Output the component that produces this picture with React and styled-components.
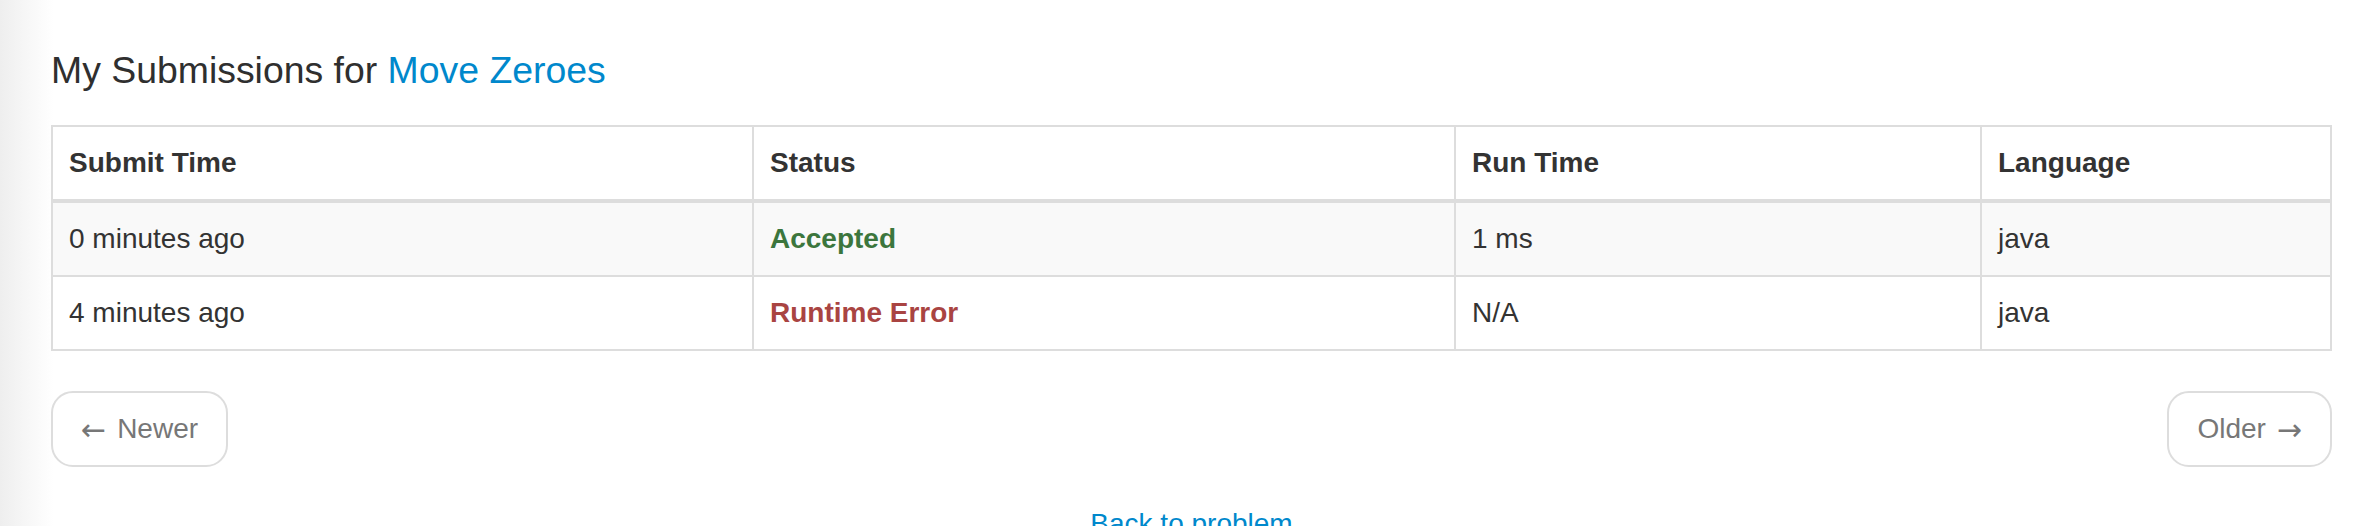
import React from "react";
import styled, { createGlobalStyle } from "styled-components";

const GlobalStyle = createGlobalStyle`
  html, body {
    margin: 0;
    padding: 0;
  }
  body {
    font-family: "Liberation Sans", Arial, Helvetica, sans-serif;
    color: #333;
    background: linear-gradient(to right, #eeeeee 0px, #f6f6f6 24px, #ffffff 54px) no-repeat;
    background-color: #fff;
    min-height: 526px;
  }
`;

const Page = styled.div`
  padding: 50px 34px 0 51px;
`;

const Heading = styled.h4`
  margin: 0 0 35px 0;
  font-size: 37.4px;
  font-weight: 400;
  line-height: 40px;
  color: #2f2f2f;
`;

const Link = styled.a`
  color: #0088cc;
  text-decoration: none;
`;

const Table = styled.table`
  width: 100%;
  table-layout: fixed;
  border-collapse: collapse;
  border: 2px solid #ddd;
  font-size: 28px;
  line-height: 40px;
  margin: 0 0 40px 0;
`;

const HeadCell = styled.th`
  text-align: left;
  font-weight: 700;
  vertical-align: bottom;
  padding: 16px;
  border: 2px solid #ddd;
  border-bottom: 4px solid #ddd;
  color: #333;
`;

const Row = styled.tr`
  background: ${(p) => (p.$striped ? "#f9f9f9" : "#fff")};
`;

const Cell = styled.td`
  padding: 16px;
  border: 2px solid #ddd;
  vertical-align: top;
  color: #333;
`;

const Status = styled.strong`
  font-weight: 700;
  color: ${(p) => (p.$ok ? "#3c763d" : "#a94442")};
`;

const Pager = styled.div`
  display: flex;
  justify-content: space-between;
  align-items: center;
  margin: 0 0 37px 0;
`;

const PagerButton = styled.a`
  display: inline-flex;
  align-items: center;
  gap: 11px;
  padding: 16px 28px;
  font-size: 28px;
  line-height: 40px;
  color: #777;
  background: #fff;
  border: 2px solid #ddd;
  border-radius: 22px;
  text-decoration: none;
`;

const Arrow = styled.span`
  font-family: "DejaVu Sans", sans-serif;
  font-size: 30px;
  line-height: 40px;
  position: relative;
  top: 1px;
`;

const Back = styled.div`
  text-align: center;
  font-size: 28px;
  line-height: 40px;
`;

const rows = [
  { time: "0 minutes ago", status: "Accepted", ok: true, run: "1 ms", lang: "java" },
  { time: "4 minutes ago", status: "Runtime Error", ok: false, run: "N/A", lang: "java" },
];

export default function App() {
  return (
    <>
      <GlobalStyle />
      <Page>
        <Heading>
          My Submissions for <Link href="#">Move Zeroes</Link>
        </Heading>
        <Table>
          <colgroup>
            <col style={{ width: "701px" }} />
            <col style={{ width: "702px" }} />
            <col style={{ width: "526px" }} />
            <col style={{ width: "350px" }} />
          </colgroup>
          <thead>
            <tr>
              <HeadCell>Submit Time</HeadCell>
              <HeadCell>Status</HeadCell>
              <HeadCell>Run Time</HeadCell>
              <HeadCell>Language</HeadCell>
            </tr>
          </thead>
          <tbody>
            {rows.map((r, i) => (
              <Row key={i} $striped={i % 2 === 0}>
                <Cell>{r.time}</Cell>
                <Cell>
                  <Status $ok={r.ok}>{r.status}</Status>
                </Cell>
                <Cell>{r.run}</Cell>
                <Cell>{r.lang}</Cell>
              </Row>
            ))}
          </tbody>
        </Table>
        <Pager>
          <PagerButton href="#">
            <Arrow>←</Arrow>
            <span>Newer</span>
          </PagerButton>
          <PagerButton href="#">
            <span>Older</span>
            <Arrow>→</Arrow>
          </PagerButton>
        </Pager>
        <Back>
          <Link href="#">Back to problem</Link>
        </Back>
      </Page>
    </>
  );
}
